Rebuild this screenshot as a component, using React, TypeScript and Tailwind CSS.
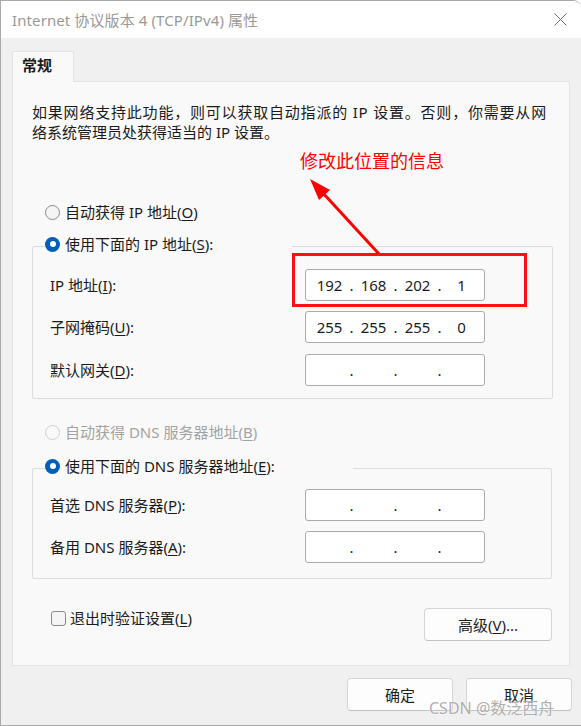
import React from "react";

function U({ c }: { c: string }) {
  return <span className="underline underline-offset-[2px] decoration-1">{c}</span>;
}

function Radio({ checked, disabled, children }: { checked?: boolean; disabled?: boolean; children: React.ReactNode }) {
  return (
    <div className={`flex items-center h-[20px] gap-[5px] ${disabled ? "text-[#a3a3a3]" : "text-[#1b1b1b]"}`}>
      {checked ? (
        <span className="w-[15px] h-[15px] rounded-full bg-[#005fb8] flex items-center justify-center shrink-0">
          <span className="w-[6px] h-[6px] rounded-full bg-white" />
        </span>
      ) : (
        <span
          className={`w-[15px] h-[15px] rounded-full border shrink-0 ${
            disabled ? "border-[#cfcfcf] bg-[#f9f9f9]" : "border-[#8a8a8a] bg-[#f5f5f5]"
          }`}
        />
      )}
      <span className="whitespace-nowrap">{children}</span>
    </div>
  );
}

function IpBox({ parts }: { parts: string[] }) {
  return (
    <div className="w-[180px] h-[32px] bg-white border border-[#ababab] rounded-[3px] flex items-center pl-[5px] text-[#1b1b1b]">
      <span className="w-[37px] text-center">{parts[0]}</span>
      <span className="w-[7px] text-center">.</span>
      <span className="w-[37px] text-center">{parts[1]}</span>
      <span className="w-[7px] text-center">.</span>
      <span className="w-[37px] text-center">{parts[2]}</span>
      <span className="w-[7px] text-center">.</span>
      <span className="w-[37px] text-center">{parts[3]}</span>
    </div>
  );
}

function Row({ label, parts, className }: { label: React.ReactNode; parts: string[]; className?: string }) {
  return (
    <div className={`flex items-center pl-[17px] ${className ?? ""}`}>
      <div className="w-[255px] text-[#1b1b1b] whitespace-nowrap">{label}</div>
      <IpBox parts={parts} />
    </div>
  );
}

function Btn({ children, className }: { children: React.ReactNode; className?: string }) {
  return (
    <div
      className={`h-[33px] bg-[#fdfdfd] border border-[#d5d5d5] border-b-[#c2c2c2] rounded-[4px] flex items-center justify-center text-[#1b1b1b] ${className ?? ""}`}
    >
      {children}
    </div>
  );
}

export default function App() {
  const empty = ["", "", "", ""];
  return (
    <div className="relative w-[581px] h-[726px] overflow-hidden bg-[#f0f0f0] border-l border-t border-b border-[#a9a9a9] rounded-tr-[8px] font-['Noto_Sans','Noto_Sans_CJK_SC',sans-serif] text-[15px] leading-[20px]">
      {/* title bar */}
      <div className="h-[37px] bg-white flex items-center justify-between pl-[11px] pr-[14px]">
        <span className="text-[#999999] text-[15px] tracking-[0.1px]">Internet 协议版本 4 (TCP/IPv4) 属性</span>
        <svg width="13" height="13" viewBox="0 0 13 13">
          <path d="M0.5 0.5 L12.5 12.5 M12.5 0.5 L0.5 12.5" stroke="#6b6b6b" strokeWidth="1" fill="none" />
        </svg>
      </div>

      {/* tab */}
      <div className="mt-[13px] ml-[11px] w-[62px] h-[31px] -mb-[1px] relative z-10 bg-[#f9f9f9] border-t border-x border-[#e3e3e3] rounded-t-[2px] pl-[9px] pt-[3px] font-semibold text-[#1b1b1b]">
        常规
      </div>

      {/* panel */}
      <div className="ml-[11px] w-[558px] h-[585px] bg-[#f9f9f9] border border-[#e3e3e3] flex flex-col">
        <div className="pl-[19px] pt-[20px] text-[#1b1b1b] whitespace-nowrap">
          <div className="tracking-[0.8px]">如果网络支持此功能，则可以获取自动指派的 IP 设置。否则，你需要从网</div>
          <div>络系统管理员处获得适当的 IP 设置。</div>
        </div>

        <div className="pl-[32px] mt-[60px]">
          <Radio>
            自动获得 IP 地址(<U c="O" />)
          </Radio>
        </div>

        <fieldset className="ml-[19px] mt-[12px] w-[521px] border border-[#dcdcdc] rounded-[2px] pb-[12px]">
          <legend className="ml-[12px] w-[247px] h-[24px]">
            <Radio checked>
              使用下面的 IP 地址(<U c="S" />):
            </Radio>
          </legend>
          <Row className="mt-[11px]" label={<>IP 地址(<U c="I" />):</>} parts={["192", "168", "202", "1"]} />
          <Row className="mt-[10px]" label={<>子网掩码(<U c="U" />):</>} parts={["255", "255", "255", "0"]} />
          <Row className="mt-[11px]" label={<>默认网关(<U c="D" />):</>} parts={empty} />
        </fieldset>

        <div className="pl-[32px] mt-[23px]">
          <Radio disabled>
            自动获得 DNS 服务器地址(<U c="B" />)
          </Radio>
        </div>

        <fieldset className="ml-[19px] mt-[14px] w-[520px] border border-[#dcdcdc] rounded-[2px] pb-[15px]">
          <legend className="ml-[12px] w-[308px] h-[24px]">
            <Radio checked>
              使用下面的 DNS 服务器地址(<U c="E" />):
            </Radio>
          </legend>
          <Row className="mt-[9px]" label={<>首选 DNS 服务器(<U c="P" />):</>} parts={empty} />
          <Row className="mt-[10px]" label={<>备用 DNS 服务器(<U c="A" />):</>} parts={empty} />
        </fieldset>

        <div className="mt-[29px] flex items-start justify-between pl-[38px] pr-[17px]">
          <div className="flex items-center h-[20px] gap-[4px] text-[#1b1b1b]">
            <span className="w-[15px] h-[15px] rounded-[3px] border border-[#8a8a8a] bg-[#f5f5f5]" />
            <span>
              退出时验证设置(<U c="L" />)
            </span>
          </div>
          <Btn className="w-[128px]">
            高级(<U c="V" />)...
          </Btn>
        </div>
      </div>

      {/* footer */}
      <div className="mt-[12px] flex justify-end gap-[13px] pr-[9px]">
        <Btn className="w-[106px]">确定</Btn>
        <Btn className="w-[106px]">取消</Btn>
      </div>

      {/* annotation overlay */}
      <div className="absolute left-[299px] top-[150px] text-[18px] leading-[20px] text-[#ff0000] whitespace-nowrap">修改此位置的信息</div>
      <svg className="absolute left-0 top-0" width="581" height="726" viewBox="0 0 581 726">
        <line x1="378" y1="253" x2="321" y2="191" stroke="#ff0000" strokeWidth="3" />
        <polygon points="309,178 329,189 318,199" fill="#ff0000" />
      </svg>
      <div className="absolute left-[291px] top-[252px] w-[235px] h-[54px] border-[3px] border-[#ff1010]" />

      {/* watermark */}
      <div className="absolute left-[428px] top-[697px] text-[16px] leading-[20px] text-[#a5a5a5]/90 whitespace-nowrap [text-shadow:0_0_2px_#ffffff]">
        CSDN @数泛西舟
      </div>
    </div>
  );
}
